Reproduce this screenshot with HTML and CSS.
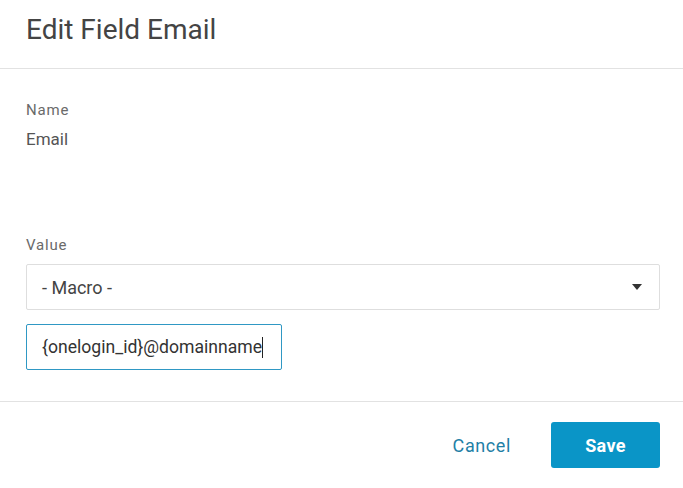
FILE: index.html
```html
<!DOCTYPE html>
<html>
<head>
<meta charset="utf-8">
<link rel="stylesheet" href="styles.css">
</head>
<body>
<div class="dialog">
  <div class="header">
    <h1 class="title">Edit Field Email</h1>
  </div>
  <div class="content">
    <div class="label name-label">Name</div>
    <div class="static-value">Email</div>
    <div class="label value-label">Value</div>
    <div class="select">
      <span class="select-text">- Macro -</span>
      <svg class="caret" width="10" height="6" viewBox="0 0 10 6"><path d="M0 0 H10 L5 6 Z" fill="#333"/></svg>
    </div>
    <div class="text-input"><span class="input-text">{onelogin_id}@domainname</span><span class="cursor"></span></div>
  </div>
  <div class="footer">
    <button class="btn-cancel">Cancel</button>
    <button class="btn-save">Save</button>
  </div>
</div>
</body>
</html>
```
FILE: styles.css
```css
html, body {
  margin: 0;
  padding: 0;
  background: #ffffff;
  font-family: Roboto, "Noto Sans", sans-serif;
}
.dialog {
  width: 683px;
  display: flex;
  flex-direction: column;
}
.header {
  height: 69px;
  box-sizing: border-box;
  padding: 14px 26px 0;
  border-bottom: 1px solid #e2e2e2;
}
.title {
  margin: 0;
  font-size: 28px;
  line-height: 32px;
  font-weight: 400;
  color: #444;
}
.content {
  padding: 0 23px 0 26px;
  display: flex;
  flex-direction: column;
}
.label {
  font-size: 15px;
  line-height: 20px;
  color: #6a6a6a;
  letter-spacing: 0.8px;
}
.name-label { margin-top: 31px; }
.static-value {
  margin-top: 8px;
  font-size: 17px;
  line-height: 22px;
  color: #555;
}
.value-label { margin-top: 85px; }
.select {
  margin-top: 9px;
  height: 46px;
  box-sizing: border-box;
  border: 1px solid #dedede;
  border-radius: 2px;
  display: flex;
  align-items: center;
  justify-content: space-between;
  padding: 0 17px 0 15px;
}
.select-text {
  font-size: 18px;
  color: #444;
}
.caret { display: block; }
.text-input {
  margin-top: 14px;
  width: 256px;
  height: 46px;
  box-sizing: border-box;
  border: 1px solid #2f98c4;
  border-radius: 2px;
  display: flex;
  align-items: center;
  padding: 0 15px;
}
.input-text {
  font-size: 17.6px;
  color: #333;
  white-space: nowrap;
}
.cursor {
  flex: none;
  width: 1px;
  height: 21px;
  background: #222;
}
.footer {
  margin-top: 31px;
  border-top: 1px solid #e2e2e2;
  padding: 20px 23px 0 26px;
  display: flex;
  justify-content: flex-end;
  align-items: center;
  gap: 24px;
}
.btn-cancel {
  background: none;
  border: none;
  font-family: inherit;
  font-size: 18px;
  letter-spacing: 0.6px;
  color: #1f80a6;
  padding: 0 16px;
  height: 46px;
}
.btn-save {
  width: 109px;
  height: 46px;
  border: none;
  border-radius: 3px;
  background: #0a95c7;
  color: #fff;
  font-family: inherit;
  font-size: 18px;
  font-weight: 700;
  letter-spacing: 0.3px;
}
```
